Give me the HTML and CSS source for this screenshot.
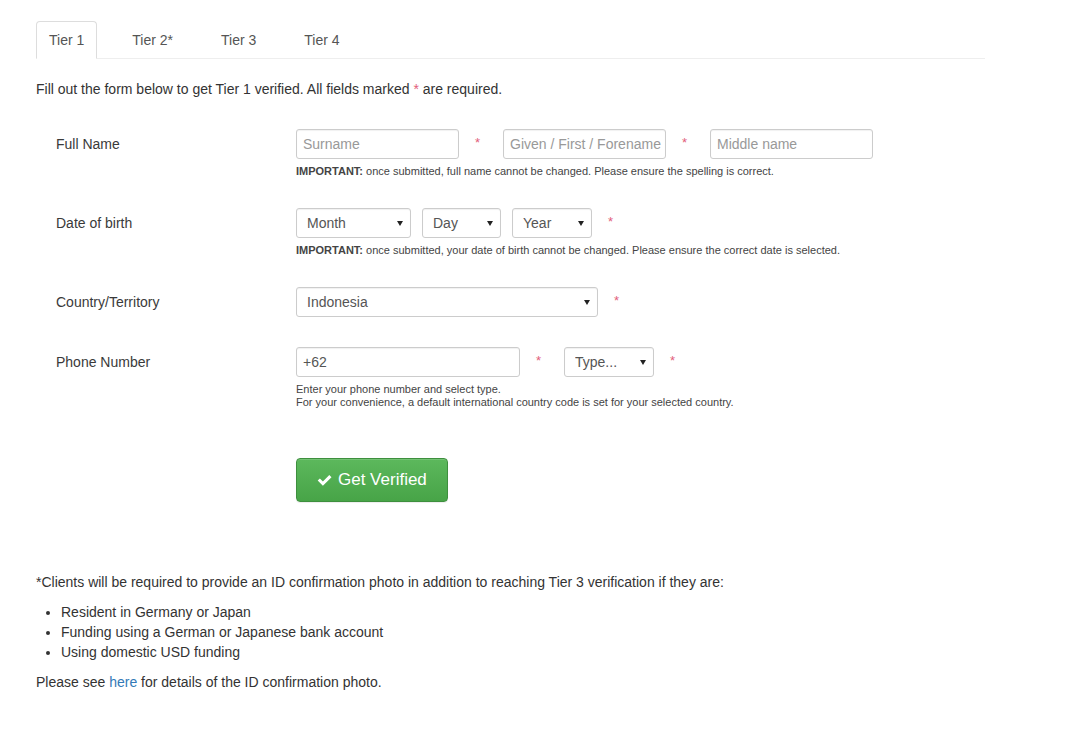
FILE: index.html
```html
<!doctype html>
<html lang="en">
<head>
  <meta charset="utf-8">
  <title>Tier 1 verification</title>
  <link rel="stylesheet" href="styles.css">
</head>
<body>
	<div class="page">
		<ul class="tabs">
			<li class="tab active">Tier 1</li>
			<li class="tab">Tier 2*</li>
			<li class="tab">Tier 3</li>
			<li class="tab">Tier 4</li>
		</ul>

		<p class="intro">Fill out the form below to get Tier 1 verified. All fields marked <span class="req-inline">*</span> are required.</p>

		<form class="verify-form">
			<div class="form-row">
				<label class="row-label">Full Name</label>
				<div class="row-body">
					<div class="controls">
						<input class="field w-name" type="text" placeholder="Surname">
						<span class="req">*</span>
						<input class="field w-name" type="text" placeholder="Given / First / Forename">
						<span class="req">*</span>
						<input class="field w-name" type="text" placeholder="Middle name">
					</div>
					<p class="help"><strong>IMPORTANT:</strong> once submitted, full name cannot be changed. Please ensure the spelling is correct.</p>
				</div>
			</div>

			<div class="form-row">
				<label class="row-label">Date of birth</label>
				<div class="row-body">
					<div class="controls">
						<span class="select-wrap w-month"><select class="field select"><option>Month</option></select></span>
						<span class="select-wrap w-day"><select class="field select"><option>Day</option></select></span>
						<span class="select-wrap w-year"><select class="field select"><option>Year</option></select></span>
						<span class="req">*</span>
					</div>
					<p class="help"><strong>IMPORTANT:</strong> once submitted, your date of birth cannot be changed. Please ensure the correct date is selected.</p>
				</div>
			</div>

			<div class="form-row">
				<label class="row-label">Country/Territory</label>
				<div class="row-body">
					<div class="controls">
						<span class="select-wrap w-country"><select class="field select"><option>Indonesia</option></select></span>
						<span class="req">*</span>
					</div>
				</div>
			</div>

			<div class="form-row">
				<label class="row-label">Phone Number</label>
				<div class="row-body">
					<div class="controls">
						<input class="field w-phone" type="text" value="+62">
						<span class="req">*</span>
						<span class="select-wrap w-type"><select class="field select"><option>Type...</option></select></span>
						<span class="req">*</span>
					</div>
					<p class="help">Enter your phone number and select type.<br>For your convenience, a default international country code is set for your selected country.</p>
				</div>
			</div>

			<div class="form-row">
				<span class="row-label"></span>
				<button class="btn-verify" type="button">
					<svg class="check-icon" aria-hidden="true" viewBox="0 0 16 16">
						<path d="M1.2 8.6 L3.4 6.4 L6.4 9.4 L12.8 3 L15 5.2 L6.4 13.8 Z" />
					</svg>
					Get Verified
				</button>
			</div>
		</form>

		<p class="note">*Clients will be required to provide an ID confirmation photo in addition to reaching Tier 3 verification if they are:</p>
		<ul class="note-list">
			<li>Resident in Germany or Japan</li>
			<li>Funding using a German or Japanese bank account</li>
			<li>Using domestic USD funding</li>
		</ul>
		<p class="note">Please see <a href="#">here</a> for details of the ID confirmation photo.</p>
	</div>
</body>
</html>
```
FILE: styles.css
```css
:root {
	--text: #333;
	--muted: #999;
	--border: #ccc;
	--tab-border: #ddd;
	--required: #e2607a;
	--link: #337ab7;
}

*,
*::after,
*::before {
	box-sizing: border-box;
}

body {
	background: #fff;
	color: var(--text);
	font: 14px/18px "Liberation Sans", Arial, sans-serif;
	margin: 0;
}

.page {
	padding: 21px 0 0 36px;
	width: 985px;
}

/* tabs */
.tabs {
	border-bottom: 1px solid #eee;
	display: flex;
	list-style: none;
	margin: 0;
	padding: 0;
}

.tab {
	border: 1px solid transparent;
	border-radius: 4px 4px 0 0;
	color: #555;
	line-height: 17px;
	margin-bottom: -1px;
	margin-right: 22px;
	padding: 10px 12px 9px;
}

.tab.active {
	background: #fff;
	border-color: var(--tab-border) var(--tab-border) transparent;
}

.intro {
	margin: 21px 0 31px;
}

.req-inline {
	color: var(--required);
}

/* form rows */
.form-row {
	display: flex;
	margin-bottom: 30px;
}

.form-row:nth-child(4) {
	margin-bottom: 49px;
}

.row-label {
	color: #3a3a3a;
	flex: 0 0 260px;
	height: 30px;
	line-height: 30px;
	padding-left: 20px;
}

.controls {
	align-items: flex-start;
	display: flex;
}

.field {
	background: #fff;
	border: 1px solid var(--border);
	border-radius: 3px;
	box-shadow: inset 0 1px 1px rgba(0, 0, 0, .06);
	color: #555;
	font: 14px "Liberation Sans", Arial, sans-serif;
	height: 30px;
	margin: 0;
	padding: 0 1px 0 6px;
}

.field::placeholder {
	color: var(--muted);
}

.w-name {
	width: 163px;
}

.w-phone {
	width: 224px;
}

.req {
	color: var(--required);
	flex: 0 0 44px;
	font-size: 13px;
	line-height: 28px;
	padding-left: 16px;
}

.select-wrap {
	display: inline-block;
	position: relative;
}

.select-wrap::after {
	border-left: 3px solid transparent;
	border-right: 3px solid transparent;
	border-top: 5px solid #222;
	content: "";
	pointer-events: none;
	position: absolute;
	right: 8px;
	top: 13px;
}

.select {
	appearance: none;
	-webkit-appearance: none;
	padding-left: 10px;
	width: 100%;
}

.w-month {
	margin-right: 11px;
	width: 115px;
}

.w-day {
	margin-right: 11px;
	width: 79px;
}

.w-year {
	width: 80px;
}

.w-country {
	width: 302px;
}

.w-type {
	width: 90px;
}

.help {
	color: #444;
	font-size: 11px;
	line-height: 13px;
	margin: 6px 0 0;
}

/* submit */
.btn-verify {
	align-items: center;
	background: linear-gradient(#5cb85c, #47a447);
	border: 1px solid #3e8f3e;
	border-radius: 4px;
	box-shadow: inset 0 1px 0 rgba(255, 255, 255, .15), 0 1px 1px rgba(0, 0, 0, .075);
	color: #fff;
	cursor: pointer;
	display: flex;
	font: 17px "Liberation Sans", Arial, sans-serif;
	gap: 5px;
	height: 44px;
	padding: 0 20px 0 19px;
	white-space: nowrap;
}

.check-icon {
	fill: #fff;
	height: 16px;
	width: 17px;
}

/* footnote */
.note {
	line-height: 20px;
	margin: 70px 0 10px;
}

.note-list {
	line-height: 20px;
	margin: 0 0 10px;
	padding-left: 25px;
}

.note-list + .note {
	margin-top: 0;
}

.note a {
	color: var(--link);
	text-decoration: none;
}
```
